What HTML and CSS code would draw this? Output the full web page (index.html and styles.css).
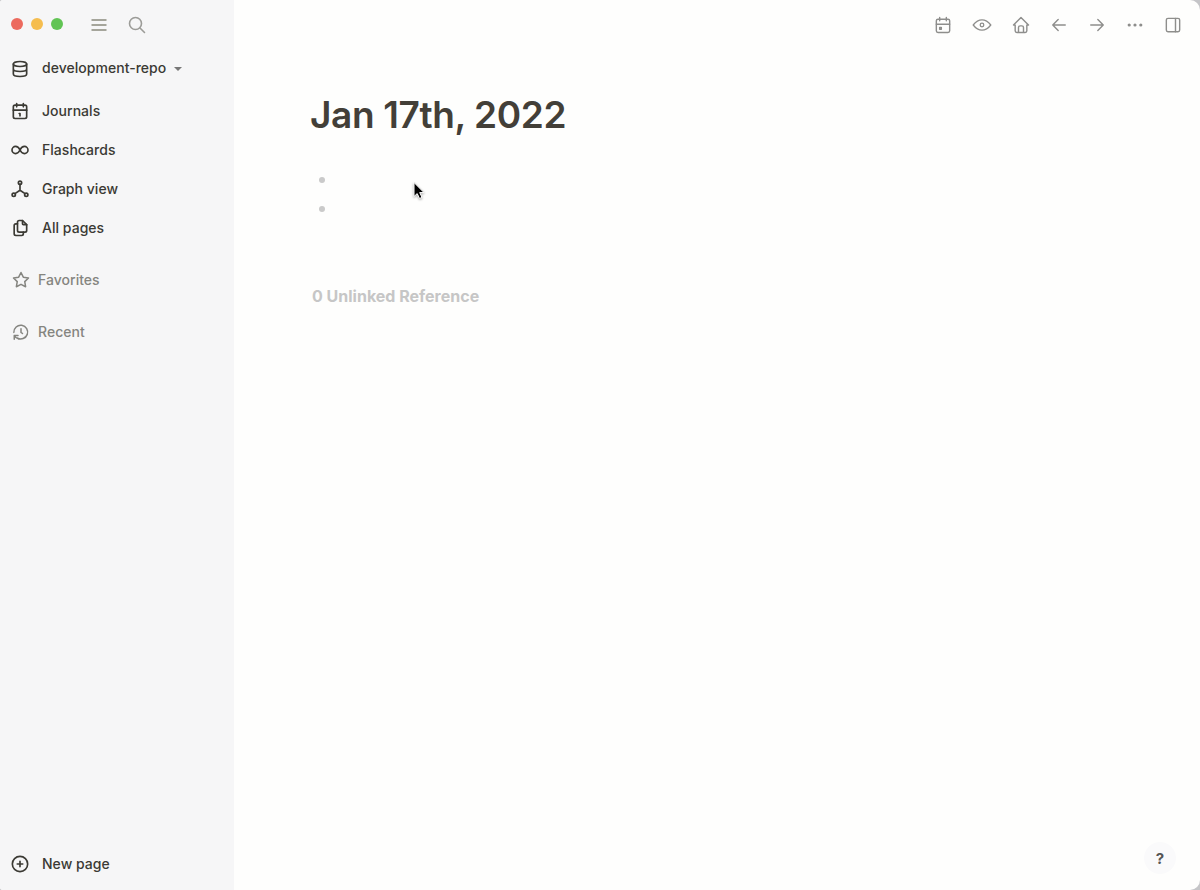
FILE: index.html
```html
<!DOCTYPE html>
<html lang="en">
<head>
<meta charset="utf-8">
<title>Jan 17th, 2022</title>
<link rel="stylesheet" href="styles.css">
</head>
<body>
<div class="window">
  <aside class="sidebar">
    <div class="titlebar">
      <span class="light red"></span><span class="light yellow"></span><span class="light green"></span>
      <svg class="icon menu" viewBox="0 0 20 20"><path d="M2.500 5h15M2.500 10h15M2.500 15h15"/></svg>
      <svg class="icon search" viewBox="0 0 20 20"><circle cx="8.500" cy="8.500" r="6"/><path d="M13 13l4.500 4.500"/></svg>
    </div>
    <div class="repo">
      <svg class="icon" viewBox="0 0 24 24"><ellipse cx="12" cy="6" rx="8" ry="3"/><path d="M4 6v6c0 1.660 3.580 3 8 3s8-1.340 8-3V6M4 12v6c0 1.660 3.580 3 8 3s8-1.340 8-3v-6"/></svg>
      <span class="repo-name">development-repo</span><i class="caret"></i>
    </div>
    <nav class="nav">
      <a class="item"><svg class="icon" viewBox="0 0 24 24"><rect x="4" y="5" width="16" height="16" rx="2"/><path d="M16 3v4M8 3v4M4 11h16M11 15h1v3"/></svg><span>Journals</span></a>
      <a class="item"><svg class="icon" viewBox="0 0 24 24"><path d="M12 12c-1.200-2.500-3-4.300-5.300-4.300a4.300 4.300 0 0 0 0 8.600C9 16.300 10.800 14.500 12 12s3-4.300 5.300-4.300a4.300 4.300 0 0 1 0 8.600C15 16.300 13.200 14.500 12 12z"/></svg><span>Flashcards</span></a>
      <a class="item"><svg class="icon" viewBox="0 0 24 24"><circle cx="12" cy="4.500" r="2"/><circle cx="4.500" cy="19" r="2"/><circle cx="19.500" cy="19" r="2"/><path d="M12 6.500v7M6 17.500L12 13.500l6 4"/></svg><span>Graph view</span></a>
      <a class="item"><svg class="icon" viewBox="0 0 24 24"><path d="M15 3v4a1 1 0 0 0 1 1h4"/><path d="M18 17h-7a2 2 0 0 1-2-2V5a2 2 0 0 1 2-2h4l5 5v7a2 2 0 0 1-2 2z"/><path d="M16 17v2a2 2 0 0 1-2 2H7a2 2 0 0 1-2-2V9a2 2 0 0 1 2-2h2"/></svg><span>All pages</span></a>
    </nav>
    <div class="group"><svg class="icon" viewBox="0 0 24 24"><path d="M12 17.750l-6.172 3.245 1.179-6.873-5-4.867 6.900-1L11.993 2l3.086 6.253 6.900 1-5 4.867 1.179 6.873z"/></svg><span>Favorites</span></div>
    <div class="group"><svg class="icon" viewBox="0 0 24 24"><path d="M12 7.500v5l2 1.500M2.500 12.500A9.200 9.200 0 1 1 7 20M3 21.500v-5h5M3 16.700c1 2 3 4.300 6 4.800"/></svg><span>Recent</span></div>
    <a class="item new"><svg class="icon" viewBox="0 0 24 24"><circle cx="12" cy="12" r="9.200"/><path d="M8.700 12h6.600M12 8.700v6.600"/></svg><span>New page</span></a>
  </aside>
  <main class="main">
    <header class="toolbar">
      <svg class="icon" viewBox="0 0 24 24"><rect x="4" y="5" width="16" height="16" rx="2"/><path d="M16 3v4M8 3v4M4 11h16"/><rect x="8" y="15" width="2" height="2"/></svg>
      <svg class="icon eye" viewBox="0 0 20 20"><path d="M1.200 10Q5.200 4.800 10 4.800T18.800 10Q14.800 15.200 10 15.200T1.200 10z"/><circle cx="10" cy="10" r="1.800"/></svg>
      <svg class="icon" viewBox="0 0 24 24"><path d="M5 12H3l9-9 9 9h-2v7a2 2 0 0 1-2 2H7a2 2 0 0 1-2-2v-7M9 21v-6a2 2 0 0 1 2-2h2a2 2 0 0 1 2 2v6"/></svg>
      <svg class="icon" viewBox="0 0 24 24"><path d="M19.500 12h-15M11 5.500L4.500 12l6.500 6.500"/></svg>
      <svg class="icon" viewBox="0 0 24 24"><path d="M4.500 12h15M13 5.500l6.500 6.500-6.500 6.500"/></svg>
      <svg class="icon dots" viewBox="0 0 20 20"><circle cx="4.200" cy="10" r="1.600"/><circle cx="10" cy="10" r="1.600"/><circle cx="15.800" cy="10" r="1.600"/></svg>
      <svg class="icon" viewBox="0 0 24 24"><rect x="4" y="4" width="16" height="16" rx="2"/><path d="M15 4v16"/></svg>
    </header>
    <article class="page">
      <h1 class="title">Jan 17th, 2022</h1>
      <ul class="blocks"><li class="block"></li><li class="block"></li></ul>
      <h2 class="references">0 Unlinked Reference</h2>
    </article>
    <button class="help">?</button>
  </main>
</div>
<svg class="cursor" viewBox="0 0 14 20"><path d="M2 1.500v14l3.200-2.900 2.300 4.900 2.500-1.100-2.300-4.800h4.300z"/></svg>
</body>
</html>
```
FILE: styles.css
```css
* { box-sizing: border-box; }
body { margin: 0; background: #c5c5c8; font-family: Inter, sans-serif; }
.window { display: flex; height: 890px; overflow: hidden; border-radius: 3px 10px 10px 3px; background: #fefefd; }
.sidebar { display: flex; flex-direction: column; width: 234px; padding: 0 10px 7px; background: #f6f6f7; color: #3b3a34; font-size: 14px; font-weight: 500; letter-spacing: 0.03px; }
.icon { flex: none; width: 20px; height: 20px; fill: none; stroke: currentColor; stroke-width: 2; stroke-linecap: round; stroke-linejoin: round; }
.titlebar { display: flex; align-items: center; height: 49px; gap: 8px; padding-left: 1px; color: #9c9c98; }
.light { width: 12px; height: 12px; margin-bottom: 1px; border-radius: 50%; }
.red { background: #ec6a5e; }
.yellow { background: #f5bd4f; }
.green { background: #61c454; }
.menu { margin-left: 18px; stroke-width: 1.8; stroke-linecap: butt; color: #a5a59b; }
.search { margin-left: 10px; stroke-width: 1.6; }
.repo { display: flex; align-items: center; gap: 12px; height: 39px; }
.repo-name { padding-bottom: 2px; }
.caret { margin-left: -4px; margin-top: 1px; border: 4px solid transparent; border-top-color: #777; border-bottom: 0; }
.nav { display: flex; flex-direction: column; margin-top: 3px; }
.item { display: flex; align-items: center; gap: 12px; height: 39px; }
.group { display: flex; align-items: center; gap: 8px; height: 26px; margin: 19px 0 7px 2px; color: #858580; }
.group .icon { width: 18px; height: 18px; margin-top: 1px; }
.new { margin-top: auto; }
.main { display: flex; flex: 1; flex-direction: column; }
.toolbar { display: flex; justify-content: flex-end; gap: 18px; padding: 15px 17px 0 0; color: #8e8e8c; }
.toolbar .icon { stroke-width: 1.7; }
.toolbar .eye { margin: 0 1px; stroke-width: 1.3; }
.toolbar .dots { fill: currentColor; stroke: none; }
.page { padding: 55px 76px 0; }
.title { margin: 0; color: #433f38; font-size: 37px; font-weight: 600; letter-spacing: -0.37px; line-height: 50px; }
.blocks { display: flex; flex-direction: column; margin: 25px 0 0 9px; padding: 0; list-style: none; }
.block { display: flex; align-items: center; height: 29px; }
.block::before { width: 6px; height: 6px; border-radius: 50%; background: #cacaca; content: ""; }
.references { margin: 63px 0 0 2px; color: #c6c6c6; font-size: 16px; font-weight: 700; line-height: 20px; }
.help { align-self: flex-end; width: 32px; height: 32px; margin: auto 24px 16px 0; padding: 0; border: 0; border-radius: 50%; background: #fafafb; color: #555; font: 700 15px Inter, sans-serif; }
.cursor { position: absolute; left: 412px; top: 181px; width: 14px; height: 20px; fill: #000; stroke: #fff; stroke-width: 1; filter: drop-shadow(0 1px 1px rgb(0 0 0 / 35%)); }
```
